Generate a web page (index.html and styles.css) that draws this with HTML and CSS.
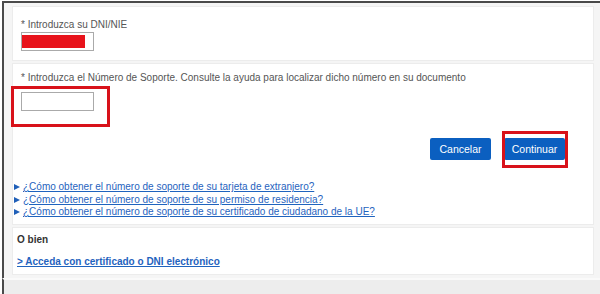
FILE: index.html
```html
<!DOCTYPE html>
<html lang="es">
<head>
  <meta charset="UTF-8">
  <title>Acceso con DNI/NIE</title>
  <link rel="stylesheet" href="styles.css">
</head>
<body>
  <div class="frame">
    <div class="panel first">
      <label class="label" for="dni">* Introduzca su DNI/NIE</label>
      <div class="field">
        <input type="text" id="dni" class="input">
        <span class="redact"></span>
      </div>
    </div>

    <div class="panel second">
      <label class="label" for="soporte">* Introduzca el Número de Soporte. Consulte la ayuda para localizar dicho número en su documento</label>
      <input type="text" id="soporte" class="input">
      <span class="mark mark-input"></span>

      <div class="actions">
        <button class="btn">Cancelar</button>
        <div class="btn-wrap">
          <button class="btn">Continuar</button>
          <span class="mark mark-btn"></span>
        </div>
      </div>

      <ul class="help">
        <li><a href="#">¿Cómo obtener el número de soporte de su tarjeta de extranjero?</a></li>
        <li><a href="#">¿Cómo obtener el número de soporte de su permiso de residencia?</a></li>
        <li><a href="#">¿Cómo obtener el número de soporte de su certificado de ciudadano de la UE?</a></li>
      </ul>
    </div>

    <div class="panel third">
      <p class="or">O bien</p>
      <a class="cert" href="#">&gt; Acceda con certificado o DNI electrónico</a>
    </div>
  </div>
  <div class="footer"></div>
</body>
</html>
```

FILE: styles.css
```css
body {
  margin: 0;
  font-family: "Liberation Sans", Arial, sans-serif;
  font-size: 10px;
  color: #555;
  background: #fff;
  overflow: hidden;
}
.frame {
  margin: 1px 0 0 2px;
  border-top: 2px solid #4a4a4a;
  border-left: 2px solid #4a4a4a;
  background: #f5f5f5;
  padding: 3px 6px 1px 8px;
}
.panel {
  position: relative;
  background: #fff;
  border: 1px solid #ececec;
  margin-bottom: 2px;
}
.first {
  padding: 12px 8px 9px;
  height: 32px;
}
.label {
  display: block;
  line-height: 12px;
}
.field {
  position: relative;
  width: 73px;
  margin-top: 1px;
}
.input {
  display: block;
  box-sizing: border-box;
  width: 73px;
  height: 19px;
  border: 1px solid #aaa;
  margin: 0;
  padding: 0;
}
.redact {
  position: absolute;
  left: 1px;
  top: 3px;
  width: 63px;
  height: 13px;
  background: #e8131b;
}
.second {
  padding: 8px 28px 5px 8px;
}
.second .input {
  margin-top: 8px;
}
.mark {
  position: absolute;
  border: 3px solid #d8121a;
  box-sizing: border-box;
}
.mark-input {
  left: -2px;
  top: 22px;
  width: 99px;
  height: 41px;
}
.actions {
  display: flex;
  justify-content: flex-end;
  gap: 13px;
  margin-top: 27px;
}
.btn-wrap {
  position: relative;
}
.mark-btn {
  left: -2px;
  top: -7px;
  width: 66px;
  height: 37px;
}
.btn {
  display: block;
  width: 61px;
  height: 22px;
  padding: 0;
  background: #0b5fc0;
  color: #fff;
  border: none;
  border-radius: 2px;
  font-family: inherit;
  font-size: 10.5px;
  cursor: pointer;
}
.help {
  list-style: none;
  margin: 21px 0 0 -8px;
  padding: 0;
}
.help li {
  line-height: 12.5px;
}
.help li::before {
  content: "";
  display: inline-block;
  border-left: 6px solid #1f5fb8;
  border-top: 3.5px solid transparent;
  border-bottom: 3.5px solid transparent;
  margin: 0 3px 0 1px;
}
.help a {
  color: #1f63be;
}
.third {
  padding: 6px 4px 6px;
}
.or {
  margin: 0;
  font-weight: bold;
  color: #333;
  line-height: 12px;
}
.cert {
  display: block;
  margin-top: 10px;
  font-weight: bold;
  color: #1f63be;
  line-height: 12px;
}
.footer {
  height: 20px;
  background: #ededed;
  border-top: 2px solid #fafafa;
  margin-left: 2px;
  border-left: 2px solid #4a4a4a;
}
```
